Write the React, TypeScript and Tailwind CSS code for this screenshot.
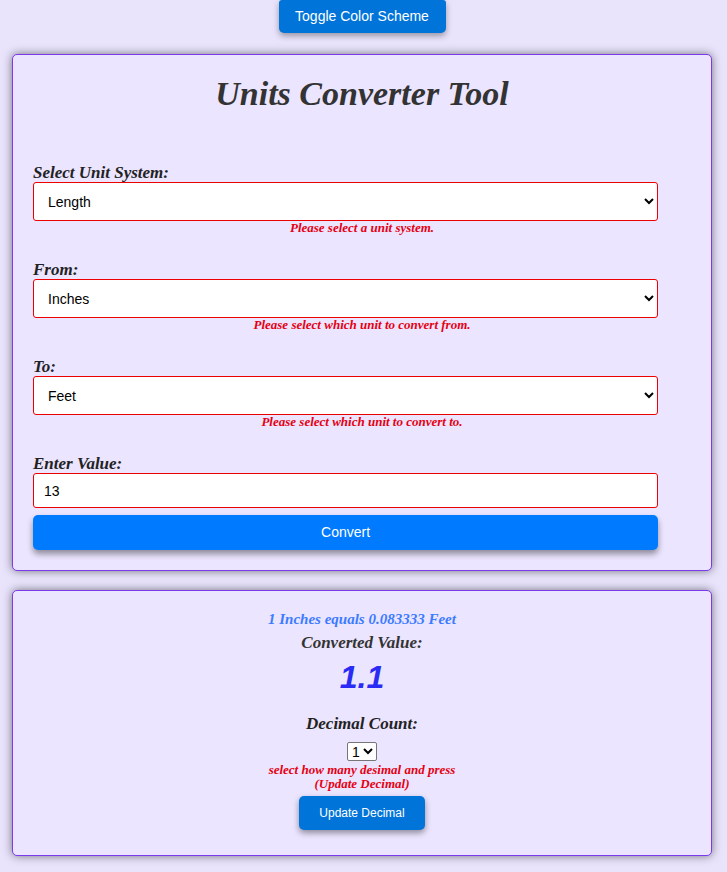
import React, { useState } from 'react';

const systems = ['Length', 'Weight', 'Temperature', 'Volume'];
const lengthUnits = ['Inches', 'Feet', 'Yards', 'Miles', 'Centimeters', 'Meters', 'Kilometers'];

function Field({
  label,
  value,
  options,
  error,
}: {
  label: string;
  value: string;
  options: string[];
  error: string;
}) {
  return (
    <div className="mt-[25px] first:mt-0">
      <label className="block text-[17px] leading-[19px] font-bold italic text-[#222]">{label}</label>
      <select
        defaultValue={value}
        className="block w-[95%] h-[39px] bg-white border border-[#ee0000] rounded-[3px] pl-[10px] pr-1 text-[14px] text-black font-['Liberation_Sans',Arial,sans-serif]"
      >
        {options.map((o) => (
          <option key={o}>{o}</option>
        ))}
      </select>
      <p className="text-center text-[13px] leading-[14px] font-bold italic text-[#e60012]">{error}</p>
    </div>
  );
}

export default function App() {
  const [decimals, setDecimals] = useState('1');

  return (
    <div className="min-h-screen bg-[#e9e4fc] pb-4 font-['Liberation_Serif',serif]">
      {/* Top toggle */}
      <div className="flex justify-center">
        <button className="mr-[3px] w-[167px] h-[33px] rounded-b-[5px] rounded-t-[3px] bg-[#0074d9] text-white text-[14px] font-['Liberation_Sans',Arial,sans-serif] shadow-[0_3px_6px_rgba(0,0,0,0.35)]">
          Toggle Color Scheme
        </button>
      </div>

      {/* Converter card */}
      <div className="ml-[12px] mt-[21px] w-[700px] rounded-[5px] border border-[#7c3aed] bg-[#ebe5ff] px-[20px] pt-[20px] pb-[20px] shadow-[0_0_10px_rgba(0,0,0,0.5)]">
        <h1 className="text-center text-[34px] leading-[37px] font-bold italic text-[#333]">Units Converter Tool</h1>

        <div className="mt-[51px]">
          <Field label="Select Unit System:" value="Length" options={systems} error="Please select a unit system." />
          <Field label="From:" value="Inches" options={lengthUnits} error="Please select which unit to convert from." />
          <Field label="To:" value="Feet" options={lengthUnits} error="Please select which unit to convert to." />

          <div className="mt-[25px]">
            <label className="block text-[17px] leading-[19px] font-bold italic text-[#222]">Enter Value:</label>
            <input
              defaultValue="13"
              className="block w-[95%] h-[35px] bg-white border border-[#ee0000] rounded-[3px] px-[10px] text-[14px] text-black font-['Liberation_Sans',Arial,sans-serif]"
            />
            <button className="mt-[7px] block w-[95%] h-[35px] rounded-[5px] bg-[#007bff] text-white text-[14px] font-['Liberation_Sans',Arial,sans-serif] shadow-[0_4px_6px_rgba(0,0,0,0.4)]">
              Convert
            </button>
          </div>
        </div>
      </div>

      {/* Result card */}
      <div className="ml-[12px] mt-[19px] w-[700px] rounded-[5px] border border-[#7c3aed] bg-[#ebe5ff] px-[20px] pt-[20px] pb-[25px] shadow-[0_0_10px_rgba(0,0,0,0.5)] flex flex-col items-center">
        <p className="text-[15px] leading-[17px] font-bold italic text-[#3b7bff]">1 Inches equals 0.083333 Feet</p>
        <p className="mt-[5px] text-[17px] leading-[20px] font-bold italic text-[#333]">Converted Value:</p>
        <p className="mt-[6px] text-[32px] leading-[36px] font-bold italic text-[#2a2cf5] font-['Liberation_Sans',Arial,sans-serif]">1.1</p>
        <p className="mt-[19px] text-[17px] leading-[20px] font-bold italic text-[#222]">Decimal Count:</p>
        <select
          value={decimals}
          onChange={(e) => setDecimals(e.target.value)}
          className="mt-[8px] h-[19px] bg-white border border-[#767676] rounded-[2px] text-[14px] text-black font-['Liberation_Sans',Arial,sans-serif]"
        >
          {['0', '1', '2', '3', '4', '5', '6'].map((n) => (
            <option key={n}>{n}</option>
          ))}
        </select>
        <p className="mt-[2px] text-center text-[13px] leading-[14px] font-bold italic text-[#e60012]">
          select how many desimal and press
          <br />
          (Update Decimal)
        </p>
        <button className="mt-[5px] w-[126px] h-[34px] rounded-[5px] bg-[#0074d9] text-white text-[12px] font-['Liberation_Sans',Arial,sans-serif] shadow-[0_3px_6px_rgba(0,0,0,0.4)]">
          Update Decimal
        </button>
      </div>
    </div>
  );
}
